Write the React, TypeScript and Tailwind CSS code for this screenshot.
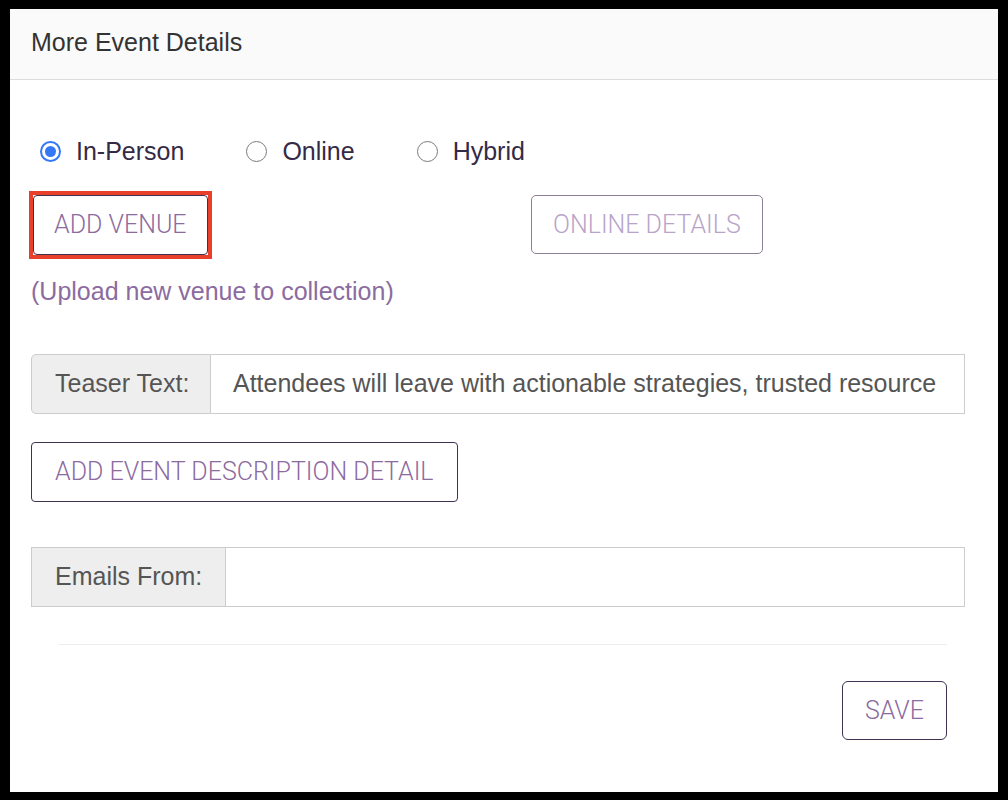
import React, { useState } from 'react';

const sans = "font-['Liberation_Sans',Arial,sans-serif]";
const roboto = "font-['Roboto',sans-serif]";

const OPTIONS = ['In-Person', 'Online', 'Hybrid'];

const Radio = ({ checked }: { checked: boolean }) =>
  checked ? (
    <span className="flex items-center justify-center w-[21px] h-[21px] rounded-full border-[2px] border-[#3478f6] bg-white">
      <span className="w-[11px] h-[11px] rounded-full bg-[#3478f6]" />
    </span>
  ) : (
    <span className="w-[21px] h-[21px] rounded-full border-[1.5px] border-[#7b7b7b] bg-white" />
  );

export default function App() {
  const [mode, setMode] = useState('In-Person');

  return (
    <div className="w-[1008px] h-[800px] bg-black pt-[9px] px-[10px] pb-[8px]">
      <div className={`w-full h-full bg-white flex flex-col ${sans}`}>
        {/* header */}
        <div className="h-[71px] bg-[#fafafa] border-b border-[#dddddd] flex items-center pl-[21px] pb-[4px]">
          <h2 className="text-[25px] text-[#333333] leading-[30px]">More Event Details</h2>
        </div>

        <div className="pl-[21px] pr-[33px] pt-[56px] flex flex-col">
          {/* event type */}
          <div className="flex items-center h-[30px] pl-[9px] gap-[62px]">
            {OPTIONS.map(o => (
              <label key={o} className="flex items-center cursor-pointer" onClick={() => setMode(o)}>
                <Radio checked={mode === o} />
                <span className="ml-[15px] text-[25px] text-[#352a45] leading-[30px]">{o}</span>
              </label>
            ))}
          </div>

          {/* venue / online buttons */}
          <div className="flex mt-[29px]">
            <div className="w-[500px] pl-[2px]">
              <div className="relative inline-block">
                <button className={`h-[60px] px-[20px] border border-[#3f3150] rounded-[4px] bg-white text-[25px] font-light text-[#8c6b9f] ${roboto}`}>
                  ADD VENUE
                </button>
                <div className="absolute -inset-[4px] border-[4px] border-[#e8402a] pointer-events-none" />
              </div>
            </div>
            <button disabled className={`h-[59px] px-[21px] border border-[#8b7e96] rounded-[5px] bg-white text-[25px] font-light text-[#b9a4c9] ${roboto}`}>
              ONLINE DETAILS
            </button>
          </div>

          <p className="mt-[21px] text-[25px] leading-[30px] text-[#8c6b9f]">(Upload new venue to collection)</p>

          {/* teaser */}
          <div className="mt-[48px] flex h-[60px] text-[25px] text-[#555555]">
            <span className="w-[180px] shrink-0 flex items-center pl-[23px] bg-[#eeeeee] border border-[#cccccc] rounded-l-[5px]">
              Teaser Text:
            </span>
            <div className="flex-1 min-w-0 flex items-center pl-[22px] pr-[20px] border border-l-0 border-[#cccccc]">
              <span className="whitespace-nowrap">Attendees will leave with actionable strategies, trusted resource</span>
            </div>
          </div>

          {/* description */}
          <div className="mt-[28px]">
            <button className={`h-[60px] px-[23px] border border-[#3f3150] rounded-[4px] bg-white text-[25px] font-light text-[#8c6b9f] ${roboto}`}>
              ADD EVENT DESCRIPTION DETAIL
            </button>
          </div>

          {/* emails */}
          <div className="mt-[45px] flex h-[60px] text-[25px] text-[#555555]">
            <span className="w-[195px] shrink-0 flex items-center pl-[23px] bg-[#eeeeee] border border-[#cccccc]">
              Emails From:
            </span>
            <div className="flex-1 border border-l-0 border-[#cccccc]" />
          </div>

          <div className="mt-[37px] ml-[27px] mr-[18px] h-px bg-[#eeeeee]" />

          <div className="mt-[36px] mr-[18px] flex justify-end">
            <button className={`h-[59px] px-[22px] border border-[#3f3150] rounded-[6px] bg-white text-[25px] font-light text-[#8c6b9f] ${roboto}`}>
              SAVE
            </button>
          </div>
        </div>
      </div>
    </div>
  );
}
